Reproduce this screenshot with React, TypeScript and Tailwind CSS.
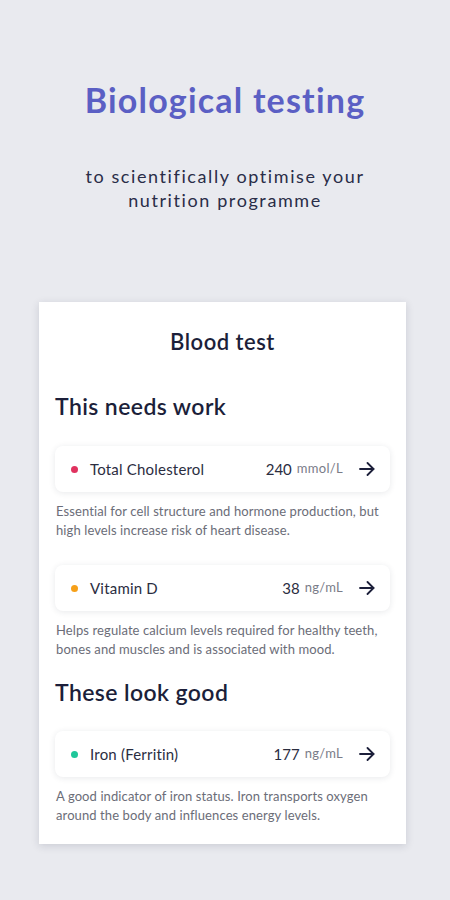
import React from "react";

const font = { fontFamily: "Lato, 'Noto Sans', sans-serif" };

function Arrow() {
  return (
    <svg width="16" height="14" viewBox="0 0 16 14" fill="none" stroke="#1c1f3a" strokeWidth="1.8" strokeLinecap="round" strokeLinejoin="round">
      <path d="M1 7h13.5" />
      <path d="M8.5 1l6 6-6 6" />
    </svg>
  );
}

function Row({ color, name, value, unit }: { color: string; name: string; value: string; unit: string }) {
  return (
    <div className="flex items-center h-[46px] rounded-lg bg-white pl-[16px] pr-[15px] shadow-[0_1px_6px_rgba(30,35,60,0.10)]">
      <span className="w-[7px] h-[7px] rounded-full shrink-0" style={{ backgroundColor: color }} />
      <span className="ml-[12px] text-[15px] text-[#2b2d3f] flex-1 tracking-[0.2px]">{name}</span>
      <span className="text-[15px] text-[#2b2d3f]">{value}</span>
      <span className="ml-[5px] text-[13px] text-[#7a7c88] tracking-[0.3px]">{unit}</span>
      <span className="ml-[16px] flex items-center"><Arrow /></span>
    </div>
  );
}

function Desc({ children }: { children: React.ReactNode }) {
  return <p className="mt-[10px] px-[1px] text-[13px] leading-[19px] text-[#6b6d78] tracking-[0.1px]">{children}</p>;
}

export default function App() {
  return (
    <div className="w-[450px] h-[900px] bg-[#e9eaef] flex flex-col items-center overflow-hidden" style={font}>
      <h1 className="mt-[80px] text-[34px] leading-[40px] font-bold text-[#5b5fc4] tracking-[1.2px]">Biological testing</h1>
      <p className="mt-[44px] text-[18px] leading-[24px] text-[#2a2d48] text-center tracking-[1.6px]">
        to scientifically optimise your
        <br />
        nutrition programme
      </p>
      <div className="self-start ml-[39px] mt-[90px] w-[367px] bg-white shadow-[0_2px_8px_rgba(30,35,60,0.15)] px-[16px] pt-[26px] pb-[19px]">
        <h2 className="text-center text-[22px] leading-[28px] font-semibold text-[#1c1f3a] tracking-[0.5px]">Blood test</h2>
        <h3 className="mt-[35px] text-[23px] leading-[30px] font-semibold text-[#1c1f3a] tracking-[0.4px]">This needs work</h3>
        <div className="mt-[25px]">
          <Row color="#e0325f" name="Total Cholesterol" value="240" unit="mmol/L" />
          <Desc>Essential for cell structure and hormone production, but high levels increase risk of heart disease.</Desc>
        </div>
        <div className="mt-[25px]">
          <Row color="#f6a019" name="Vitamin D" value="38" unit="ng/mL" />
          <Desc>Helps regulate calcium levels required for healthy teeth, bones and muscles and is associated with mood.</Desc>
        </div>
        <h3 className="mt-[18px] text-[23px] leading-[30px] font-semibold text-[#1c1f3a] tracking-[0.4px]">These look good</h3>
        <div className="mt-[24px]">
          <Row color="#1fc79a" name="Iron (Ferritin)" value="177" unit="ng/mL" />
          <Desc>A good indicator of iron status. Iron transports oxygen around the body and influences energy levels.</Desc>
        </div>
      </div>
    </div>
  );
}
